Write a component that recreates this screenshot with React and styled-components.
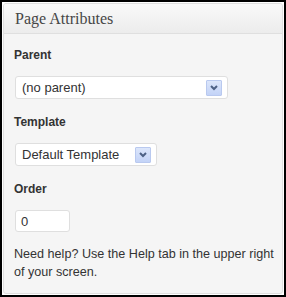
import React from 'react';
import styled, { createGlobalStyle } from 'styled-components';

const Global = createGlobalStyle`
  html, body {
    margin: 0;
    padding: 0;
    background: #fff;
  }
`;

const Frame = styled.div`
  width: 286px;
  height: 297px;
  box-sizing: border-box;
  border: 2px solid #000;
  padding: 1px;
  background: #fff;
`;

const Panel = styled.div`
  height: 100%;
  box-sizing: border-box;
  border: 1px solid #dfdfdf;
  border-radius: 3px;
  background: #f5f5f5;
  overflow: hidden;
`;

const Header = styled.div`
  height: 30px;
  box-sizing: border-box;
  border-bottom: 1px solid #dfdfdf;
  background: linear-gradient(to bottom, #f9f9f9, #ececec);
  padding: 0 0 0 11px;
  display: flex;
  align-items: center;
`;

const Title = styled.h3`
  margin: 0;
  font-family: "Liberation Serif", "Times New Roman", serif;
  font-weight: normal;
  font-size: 16px;
  color: #464646;
`;

const Body = styled.div`
  padding: 14px 6px 0 10px;
  display: flex;
  flex-direction: column;
  align-items: flex-start;
  font-family: "Liberation Sans", Arial, sans-serif;
  color: #333;
`;

const Label = styled.div`
  font-size: 12px;
  font-weight: bold;
  line-height: 15px;
  margin-bottom: 13px;
`;

const Select = styled.div`
  width: ${p => p.width}px;
  height: 23px;
  box-sizing: border-box;
  margin-left: 1px;
  margin-bottom: 16px;
  border: 1px solid #dfdfdf;
  border-radius: 3px;
  background: #fff;
  display: flex;
  align-items: center;
  justify-content: space-between;
  padding: 0 5px 0 6px;
  font-size: 13px;
`;

const Arrow = styled.span`
  width: 16px;
  height: 16px;
  box-sizing: border-box;
  border: 1px solid #b9c9ef;
  border-radius: 1px;
  background: linear-gradient(to bottom, #dce6fb, #c3d3f7);
  display: flex;
  align-items: center;
  justify-content: center;
`;

const Input = styled.div`
  width: 55px;
  height: 22px;
  box-sizing: border-box;
  margin-left: 1px;
  border: 1px solid #dfdfdf;
  border-radius: 3px;
  background: #fff;
  padding: 0 5px;
  font-size: 13px;
  display: flex;
  align-items: center;
`;

const Help = styled.p`
  margin: 13px 0 0 0;
  font-size: 12.6px;
  line-height: 18px;
  color: #333;
`;

const Chevron = () => (
  <svg width="8" height="6" viewBox="0 0 8 6">
    <path d="M1 1 L4 4 L7 1" fill="none" stroke="#4d6185" strokeWidth="2" />
  </svg>
);

const Dropdown = ({ width, value }) => (
  <Select width={width}>
    <span>{value}</span>
    <Arrow><Chevron /></Arrow>
  </Select>
);

const App = () => (
  <Frame>
    <Global />
    <Panel>
      <Header>
        <Title>Page Attributes</Title>
      </Header>
      <Body>
        <Label>Parent</Label>
        <Dropdown width={213} value="(no parent)" />
        <Label>Template</Label>
        <Dropdown width={142} value="Default Template" />
        <Label>Order</Label>
        <Input>0</Input>
        <Help>Need help? Use the Help tab in the upper right of your screen.</Help>
      </Body>
    </Panel>
  </Frame>
);

export default App;
